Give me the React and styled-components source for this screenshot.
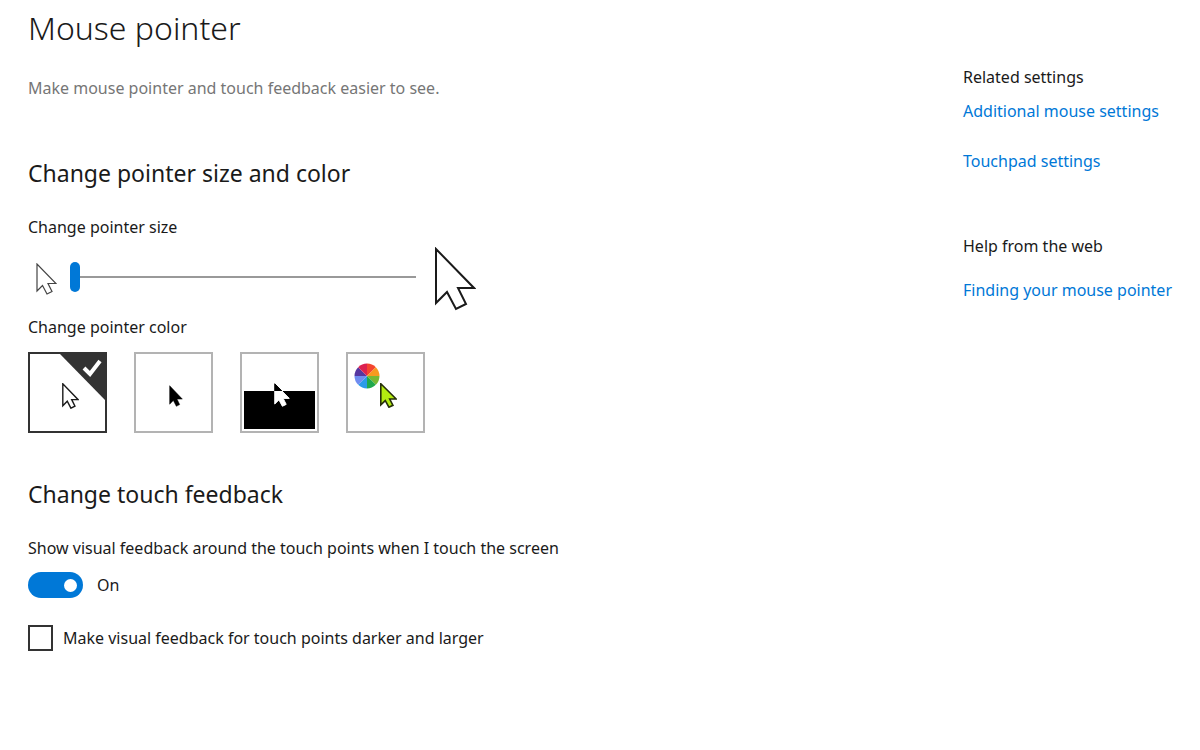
import React, { useState } from 'react'
import styled, { createGlobalStyle } from 'styled-components'

const POINTER = 'M2 2 V56 L13 45 L22 62 L32 57 L24 41 H40 Z'
const WHEEL = ['#f4452f', '#f79a1f', '#78b833', '#20a84c', '#2b9be8', '#6f8cf0', '#5636a0', '#dc2150']

function Pointer({ x, y, width, height, fill = '#fff', stroke = '#1a1a1a', weight = 2 }) {
  return (
    <svg x={x} y={y} width={width} height={height} viewBox="0 0 42 64" preserveAspectRatio="none" aria-hidden="true">
      <path d={POINTER} fill={fill} stroke={stroke} strokeWidth={weight} vectorEffect="non-scaling-stroke" />
    </svg>
  )
}

function Wheel({ cx, cy, r }) {
  const step = (Math.PI * 2) / WHEEL.length
  const point = (i) => `${cx + r * Math.sin(i * step)} ${cy - r * Math.cos(i * step)}`
  return WHEEL.map((color, i) => (
    <path
      key={color}
      d={`M${cx} ${cy} L${point(i)} A${r} ${r} 0 0 1 ${point(i + 1)} Z`}
      fill={color}
    />
  ))
}

const art = {
  white: <Pointer x={32} y={29} width={17} height={26} weight={1.4} />,
  black: <Pointer x={33} y={31} width={14} height={22} fill="#000" stroke="#000" weight={0.5} />,
  inverted: (
    <>
      <defs>
        <linearGradient id="split" gradientUnits="userSpaceOnUse" x1="0" y1="0" x2="0" y2="64">
          <stop offset="0.33" stopColor="#000" />
          <stop offset="0.33" stopColor="#fff" />
        </linearGradient>
      </defs>
      <rect x={2} y={37} width={71} height={38} fill="#000" />
      <Pointer x={32} y={29} width={16} height={24} fill="url(#split)" stroke="url(#split)" weight={1} />
    </>
  ),
  custom: (
    <>
      <Wheel cx={19} cy={22} r={12.5} />
      <Pointer x={32} y={29} width={17} height={25} fill="#b4ec10" stroke="#26300a" weight={1.6} />
    </>
  ),
}

function App() {
  const [size, setSize] = useState(1)
  const [color, setColor] = useState('white')
  const [feedback, setFeedback] = useState(true)
  const [darker, setDarker] = useState(false)

  return (
    <>
      <GlobalStyle />
      <Page>
        <Main>
          <Title>Mouse pointer</Title>
          <Intro>Make mouse pointer and touch feedback easier to see.</Intro>

          <Section $top="55px">
            <Heading>Change pointer size and color</Heading>
            <Label htmlFor="size">Change pointer size</Label>
            <SizeRow>
              <Pointer width={21} height={32} stroke="#444" weight={1.2} />
              <Slider id="size" type="range" min="1" max="15" value={size} onChange={(e) => setSize(e.target.value)} />
              <Pointer width={42} height={64} />
            </SizeRow>
            <Label as="p" id="color-label">Change pointer color</Label>
            <Swatches role="radiogroup" aria-labelledby="color-label">
              {Object.keys(art).map((name) => (
                <Swatch key={name} $active={color === name}>
                  <SwatchInput
                    type="radio"
                    name="color"
                    aria-label={name}
                    checked={color === name}
                    onChange={() => setColor(name)}
                  />
                  <svg width="75" height="77" aria-hidden="true">
                    {art[name]}
                    {color === name && (
                      <>
                        <path d="M30 0 H75 V46 Z" fill="#333" />
                        <path d="M54 14 L60 20 L70 7" fill="none" stroke="#fff" strokeWidth="4" />
                      </>
                    )}
                  </svg>
                </Swatch>
              ))}
            </Swatches>
          </Section>

          <Section $top="43px">
            <Heading>Change touch feedback</Heading>
            <Label htmlFor="feedback">Show visual feedback around the touch points when I touch the screen</Label>
            <Row $gap="14px">
              <Toggle
                id="feedback"
                type="checkbox"
                role="switch"
                checked={feedback}
                onChange={() => setFeedback(!feedback)}
              />
              <span>{feedback ? 'On' : 'Off'}</span>
            </Row>
            <CheckRow $gap="10px">
              <Check id="darker" type="checkbox" checked={darker} onChange={() => setDarker(!darker)} />
              <label htmlFor="darker">Make visual feedback for touch points darker and larger</label>
            </CheckRow>
          </Section>
        </Main>

        <Aside>
          <LinkGroup $space="10px">
            <SideHeading>Related settings</SideHeading>
            <SideLink href="#mouse">Additional mouse settings</SideLink>
            <SideLink href="#touchpad">Touchpad settings</SideLink>
          </LinkGroup>
          <LinkGroup $space="20px">
            <SideHeading>Help from the web</SideHeading>
            <SideLink href="#finding">Finding your mouse pointer</SideLink>
          </LinkGroup>
        </Aside>
      </Page>
    </>
  )
}

const GlobalStyle = createGlobalStyle`
  * {
    box-sizing: border-box;
  }
  body {
    margin: 0;
    background: #fff;
    color: #1a1a1a;
    font-family: 'Noto Sans', 'Open Sans', sans-serif;
    font-size: 16px;
    line-height: 24px;
  }
  h1, h2, h3, p {
    margin: 0;
    font-weight: 400;
  }
  svg {
    display: block;
    flex: none;
  }
`
const Page = styled.div`
  display: flex;
  justify-content: space-between;
  padding-left: 28px;
`
const Main = styled.main`
  flex: 1;
  padding: 4px 0 32px;
`
const Title = styled.h1`
  font-size: 32px;
  font-weight: 300;
  line-height: 48px;
`
const Intro = styled.p`
  margin-top: 24px;
  color: #767676;
`
const Section = styled.section`
  margin-top: ${(props) => props.$top};
`
const Heading = styled.h2`
  margin-bottom: 24px;
  font-size: 23px;
  line-height: 36px;
`
const Label = styled.label`
  display: block;
`
const SizeRow = styled.div`
  display: flex;
  align-items: center;
  gap: 13px;
  margin: 8px 0 4px;
  padding-left: 8px;
`
const Slider = styled.input`
  appearance: none;
  width: 346px;
  height: 30px;
  margin: 0 5px 4px 0;
  background: transparent;
  cursor: pointer;

  &::-webkit-slider-runnable-track {
    height: 2px;
    background: #999;
  }
  &::-webkit-slider-thumb {
    appearance: none;
    width: 10px;
    height: 30px;
    margin-top: -14px;
    border-radius: 5px;
    background: #0078d7;
  }
`
const Swatches = styled.div`
  display: flex;
  gap: 27px;
  margin-top: 13px;
`
const Swatch = styled.label`
  position: relative;
  border: 2px solid ${(props) => (props.$active ? '#333' : '#b3b3b3')};
  cursor: pointer;
`
const SwatchInput = styled.input`
  position: absolute;
  inset: 0;
  margin: 0;
  opacity: 0;
  cursor: pointer;
`
const Row = styled.div`
  display: flex;
  align-items: center;
  gap: ${(props) => props.$gap};
  margin-top: 12px;
`
const CheckRow = styled(Row)`
  margin-top: 27px;
`
const Toggle = styled.input`
  appearance: none;
  display: flex;
  align-items: center;
  justify-content: ${(props) => (props.checked ? 'flex-end' : 'flex-start')};
  width: 55px;
  height: 26px;
  margin: 0;
  padding: 0 6px;
  border-radius: 13px;
  background: ${(props) => (props.checked ? '#0078d7' : '#999')};
  cursor: pointer;

  &::before {
    content: '';
    width: 13px;
    height: 13px;
    border-radius: 50%;
    background: #fff;
  }
`
const Check = styled.input`
  appearance: none;
  width: 25px;
  height: 26px;
  margin: 0;
  border: 2px solid #333;
  background: #fff;

  &:checked {
    background: #0078d7;
  }
`
const Aside = styled.aside`
  display: flex;
  flex-direction: column;
  gap: 61px;
  flex: 0 0 237px;
  padding-top: 65px;
`
const SideHeading = styled.h3`
  font-size: 16px;
`
const SideLink = styled.a`
  color: #0078d7;
  text-decoration: none;
  white-space: nowrap;

  & + & {
    margin-top: 26px;
  }
`
const LinkGroup = styled.nav`
  display: flex;
  flex-direction: column;
  align-items: flex-start;

  ${SideHeading} {
    margin-bottom: ${(props) => props.$space};
  }
`

export default App
